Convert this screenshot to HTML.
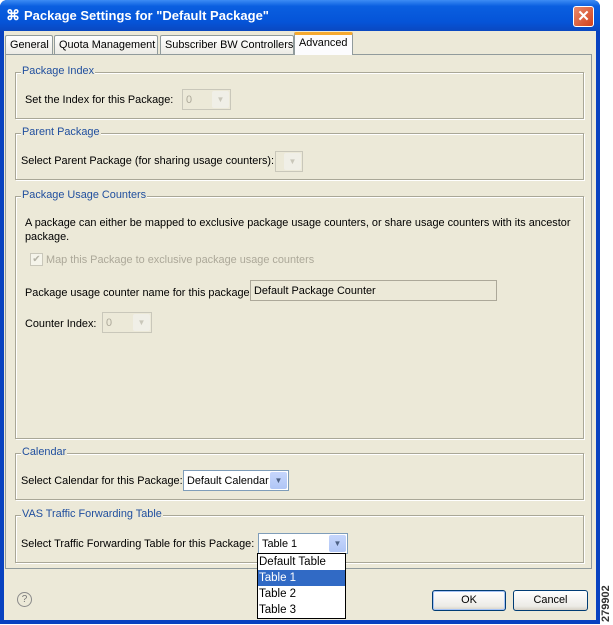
<!DOCTYPE html>
<html><head><meta charset="utf-8"><style>
*{margin:0;padding:0;box-sizing:border-box}
body{width:613px;height:625px;background:#fff;position:relative;overflow:hidden;font-family:"Liberation Sans",sans-serif;font-size:10.9px;color:#000}
.a{position:absolute}
.win{left:0;top:0;width:600px;height:624px;background:#0842c0;border-radius:7px 7px 0 0}
.tb{left:0;top:0;width:600px;height:31px;border-radius:7px 7px 0 0;background:linear-gradient(#3d8cf4,#0a5fe0 20%,#0554d8 70%,#0a48c0)}
.body{left:4px;top:31px;width:592px;height:589px;background:#ece9d8}
.grp{border:1px solid #a9a797;box-shadow:inset 1px 1px 0 #fff,1px 1px 0 #fff;left:15px;width:569px}
.lg{position:absolute;left:5px;top:-8px;background:#ece9d8;color:#1f4e9e;padding:0 1px}
.t{position:absolute;white-space:nowrap}
.combo{position:absolute;border:1px solid #7f9db9;background:#fff;height:21px}
.combo.dis{border-color:#c9c7ba;background:#ece9d8;color:#aca899}
.arr{position:absolute;right:1px;top:1px;width:17px;height:17px;background:linear-gradient(#c6d6fc,#b0c6f6);border-radius:2px;color:#4d6185;font-size:8px;text-align:center;line-height:17px}
.dis .arr{background:#f0efe7;color:#c9c7ba}
.tab{position:absolute;top:35px;height:19px;border:1px solid #919b9c;border-bottom:none;background:linear-gradient(#fff,#ecebe5);padding:3px 4px;white-space:nowrap;border-radius:2px 2px 0 0}
.btn{position:absolute;top:590px;height:21px;border:1px solid #003c74;border-radius:3px;background:linear-gradient(#fff,#ecebe6 80%,#d6d0c5);text-align:center;line-height:19px}
</style></head><body>
<div class="a win"></div>
<div class="a tb"></div>
<div class="a" style="left:6px;top:7px;color:#fff;font-weight:bold;font-size:14px">⌘</div>
<div class="a" style="left:24px;top:8px;color:#fff;font-weight:bold;font-size:13px">Package Settings for "Default Package"</div>
<div class="a" style="left:573px;top:6px;width:21px;height:21px;border:1px solid #fff;border-radius:3px;background:linear-gradient(135deg,#e88a6c,#d3401c);color:#fff;font-weight:bold;font-size:15px;text-align:center;line-height:19px">✕</div>
<div class="a body"></div>
<div class="a" style="left:5px;top:54px;width:587px;height:515px;border:1px solid #919b9c;background:#ece9d8"></div>
<div class="tab" style="left:5px;width:48px">General</div>
<div class="tab" style="left:54px;width:104px">Quota Management</div>
<div class="tab" style="left:160px;width:134px">Subscriber BW Controllers</div>
<div class="tab" style="left:294px;top:32px;height:23px;width:59px;background:#fcfcfe;border-top:3px solid #f5a930;padding-top:2px;z-index:2">Advanced</div>

<div class="a grp" style="top:72px;height:47px"><span class="lg">Package Index</span>
<span class="t" style="left:9px;top:21px">Set the Index for this Package:</span>
<div class="combo dis" style="left:166px;top:16px;width:49px"><span class="t" style="left:3px;top:4px">0</span><div class="arr">▼</div></div></div>

<div class="a grp" style="top:133px;height:47px"><span class="lg">Parent Package</span>
<span class="t" style="left:5px;top:21px">Select Parent Package (for sharing usage counters):</span>
<div class="combo dis" style="left:259px;top:17px;width:28px"><div class="arr">▼</div></div></div>

<div class="a grp" style="top:196px;height:243px"><span class="lg">Package Usage Counters</span>
<span class="t" style="left:9px;top:20px">A package can either be mapped to exclusive package usage counters, or share usage counters with its ancestor</span>
<span class="t" style="left:9px;top:34px">package.</span>
<div class="a" style="left:14px;top:56px;width:13px;height:13px;border:1px solid #c9c7ba;background:#f5f4ea;color:#b5b3a6;font-size:10px;line-height:11px;text-align:center">✔</div>
<span class="t" style="left:30px;top:57px;color:#aca899">Map this Package to exclusive package usage counters</span>
<span class="t" style="left:9px;top:90px">Package usage counter name for this package:</span>
<div class="a" style="left:234px;top:83px;width:247px;height:21px;border:1px solid #aca899;background:#ece9d8"><span class="t" style="left:3px;top:4px">Default Package Counter</span></div>
<span class="t" style="left:9px;top:121px">Counter Index:</span>
<div class="combo dis" style="left:86px;top:115px;width:50px"><span class="t" style="left:3px;top:4px">0</span><div class="arr">▼</div></div></div>

<div class="a grp" style="top:453px;height:47px"><span class="lg">Calendar</span>
<span class="t" style="left:5px;top:21px">Select Calendar for this Package:</span>
<div class="combo" style="left:167px;top:16px;width:106px"><span class="t" style="left:3px;top:4px">Default Calendar</span><div class="arr">▼</div></div></div>

<div class="a grp" style="top:515px;height:48px"><span class="lg">VAS Traffic Forwarding Table</span>
<span class="t" style="left:5px;top:22px">Select Traffic Forwarding Table for this Package:</span>
<div class="combo" style="left:242px;top:17px;width:90px"><span class="t" style="left:3px;top:4px">Table 1</span><div class="arr">▼</div></div></div>

<div class="a" style="left:257px;top:553px;width:89px;height:66px;border:1px solid #000;background:#fff;z-index:3;font-size:11.5px">
<div style="height:16px;padding-left:1px;line-height:16px">Default Table</div>
<div style="height:16px;padding-left:1px;line-height:16px;background:#316ac5;color:#fff">Table 1</div>
<div style="height:16px;padding-left:1px;line-height:16px">Table 2</div>
<div style="height:16px;padding-left:1px;line-height:16px">Table 3</div></div>

<div class="a" style="left:17px;top:592px;width:15px;height:15px;border:1px solid #8a8a8a;border-radius:50%;color:#777;font-size:10px;text-align:center;line-height:13px">?</div>
<div class="btn" style="left:432px;width:74px;box-shadow:inset 0 0 0 1px #a6c3f5">OK</div>
<div class="btn" style="left:513px;width:75px">Cancel</div>
<div class="a" style="left:600px;top:622px;transform:rotate(-90deg);transform-origin:left top;font-size:11px;font-weight:bold;color:#333;line-height:12px">279902</div>
</body></html>
